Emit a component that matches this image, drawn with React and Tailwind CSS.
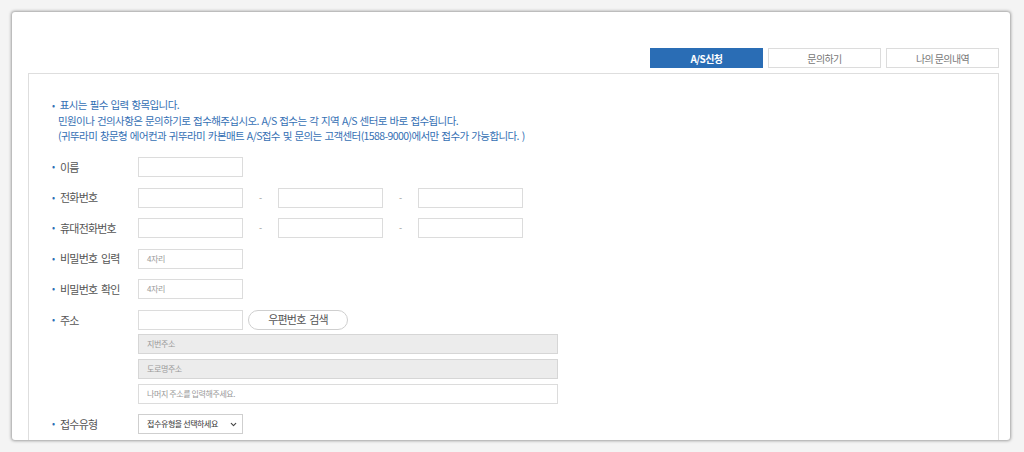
import { ChevronDown } from "lucide-react";

const font = { fontFamily: '"Noto Sans CJK KR", "Noto Sans", sans-serif' };

function Label({ children }) {
  return (
    <div className="flex w-[86px] shrink-0 items-center text-[11px] tracking-[-0.8px] text-[#555] [word-spacing:2px]">
      <span className="w-[8px] text-[9px] text-[#2a6db5]">•</span>
      <span>{children}</span>
    </div>
  );
}

function Field({ placeholder, className = "w-[105px]" }) {
  return (
    <div
      className={`flex h-[20px] items-center border border-[#dcdcdc] bg-white pl-[8px] text-[8px] tracking-[-0.4px] text-[#999] ${className}`}
    >
      {placeholder}
    </div>
  );
}

function Dash() {
  return <div className="w-[35px] text-center text-[9px] text-[#999]">-</div>;
}

export default function App() {
  const tabs = ["A/S신청", "문의하기", "나의 문의내역"];
  return (
    <div className="h-[452px] w-[1024px] overflow-hidden bg-[#f4f4f4] pl-[12px] pt-[12px]" style={font}>
      <div className="h-[428px] w-[998px] overflow-hidden rounded-[3px] bg-white pl-[16px] pr-[11px] shadow-[0_0_3px_1px_rgba(0,0,0,0.35)]">
        <div className="mt-[36px] flex justify-end gap-[5px]">
          {tabs.map((t, i) => (
            <div
              key={t}
              className={
                i === 0
                  ? "flex h-[20px] w-[113px] items-center justify-center bg-[#2a6db5] text-[10px] font-bold tracking-[-0.6px] text-white"
                  : "flex h-[20px] w-[113px] items-center justify-center border border-[#dcdcdc] text-[10px] tracking-[-0.6px] text-[#777]"
              }
            >
              {t}
            </div>
          ))}
        </div>

        <div className="mt-[5px] h-[500px] border border-[#dedede] pl-[23px] pt-[23px]">
          <div className="text-[10.5px] leading-[15px] tracking-[-0.6px] text-[#3570b4] [word-spacing:1px]">
            <div>
              <span className="inline-block w-[5px] text-[9px]">•</span> 표시는 필수 입력 항목입니다.
            </div>
            <div className="pl-[6px]">
              민원이나 건의사항은 문의하기로 접수해주십시오. A/S 접수는 각 지역 A/S 센터로 바로 접수됩니다.
            </div>
            <div className="pl-[6px]">
              (귀뚜라미 창문형 에어컨과 귀뚜라미 카본매트 A/S접수 및 문의는 고객센터(1588-9000)에서만 접수가 가능합니다. )
            </div>
          </div>

          <div className="mt-[14px] flex flex-col gap-[10.5px]">
            <div className="flex items-center">
              <Label>이름</Label>
              <Field />
            </div>
            <div className="flex items-center">
              <Label>전화번호</Label>
              <Field />
              <Dash />
              <Field />
              <Dash />
              <Field />
            </div>
            <div className="flex items-center">
              <Label>휴대전화번호</Label>
              <Field />
              <Dash />
              <Field />
              <Dash />
              <Field />
            </div>
            <div className="flex items-center">
              <Label>비밀번호 입력</Label>
              <Field placeholder="4자리" />
            </div>
            <div className="flex items-center">
              <Label>비밀번호 확인</Label>
              <Field placeholder="4자리" />
            </div>
            <div className="flex items-start">
              <Label>
                <span className="leading-[20px]">주소</span>
              </Label>
              <div className="flex flex-col">
                <div className="flex items-center gap-[5px]">
                  <Field />
                  <div className="flex h-[20px] w-[100px] items-center justify-center rounded-full border border-[#cfcfcf] text-[11px] tracking-[-0.8px] text-[#555] [word-spacing:2px]">
                    우편번호 검색
                  </div>
                </div>
                <div className="mt-[4px] flex h-[20px] w-[420px] items-center border border-[#d6d6d6] bg-[#ececec] pl-[8px] text-[8px] tracking-[-0.4px] text-[#999]">
                  지번주소
                </div>
                <div className="mt-[5px] flex h-[20px] w-[420px] items-center border border-[#d6d6d6] bg-[#ececec] pl-[8px] text-[8px] tracking-[-0.4px] text-[#999]">
                  도로명주소
                </div>
                <div className="mt-[5px] flex h-[20px] w-[420px] items-center border border-[#dcdcdc] bg-white pl-[8px] text-[8px] tracking-[-0.4px] text-[#999]">
                  나머지 주소를 입력해주세요.
                </div>
              </div>
            </div>
            <div className="flex items-center">
              <Label>접수유형</Label>
              <div className="flex h-[20px] w-[105px] items-center justify-between border border-[#cfcfcf] bg-white pl-[8px] pr-[4px] text-[8px] tracking-[-0.4px] text-[#333]">
                <span>접수유형을 선택하세요</span>
                <ChevronDown size={9} strokeWidth={3} className="text-[#444]" />
              </div>
            </div>
          </div>
        </div>
      </div>
    </div>
  );
}
